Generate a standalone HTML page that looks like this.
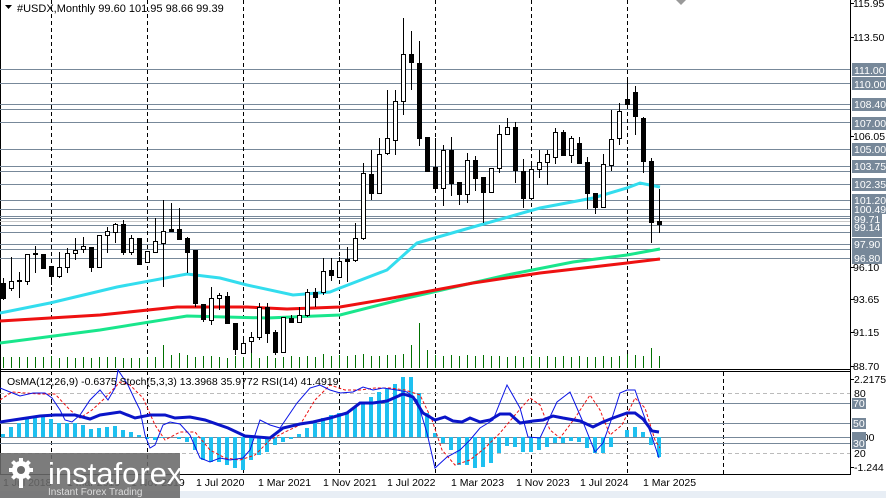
<!DOCTYPE html>
<html><head><meta charset="utf-8"><style>
html,body{margin:0;padding:0;background:#fff;}
svg{display:block;font-family:"Liberation Sans",Tahoma,sans-serif;}
.w{fill:#fff;stroke:#000;stroke-width:1}
.b{fill:#000;stroke:#000;stroke-width:1}
.k{stroke:#000;stroke-width:1}
.t{font-size:10.5px;fill:#000}
.lb{font-size:10.5px;fill:#fff}
</style></head><body>
<svg width="886" height="498" viewBox="0 0 886 498" xmlns="http://www.w3.org/2000/svg">
<rect width="886" height="498" fill="#fff"/>
<!-- frames -->
<line x1="0.5" y1="0" x2="0.5" y2="474" stroke="#000"/>
<line x1="850.5" y1="0" x2="850.5" y2="474" stroke="#000"/>
<line x1="0" y1="369.5" x2="851" y2="369.5" stroke="#000"/>
<line x1="0" y1="371.5" x2="851" y2="371.5" stroke="#000"/>
<line x1="0" y1="474.5" x2="851" y2="474.5" stroke="#000"/>
<polygon points="676,0 686,0 681,5" fill="#999"/>
<!-- level lines -->
<g stroke="#778899" stroke-width="1">
<line x1="0" x2="850" y1="69.5" y2="69.5"/><line x1="0" x2="850" y1="83.5" y2="83.5"/>
<line x1="0" x2="850" y1="104.5" y2="104.5"/><line x1="0" x2="850" y1="109.5" y2="109.5"/>
<line x1="0" x2="850" y1="122.5" y2="122.5"/><line x1="0" x2="850" y1="149.5" y2="149.5"/>
<line x1="0" x2="850" y1="166.5" y2="166.5"/><line x1="0" x2="850" y1="171.5" y2="171.5"/>
<line x1="0" x2="850" y1="184.5" y2="184.5"/><line x1="0" x2="850" y1="200.5" y2="200.5"/>
<line x1="0" x2="850" y1="209.5" y2="209.5"/><line x1="0" x2="850" y1="216.5" y2="216.5"/>
<line x1="0" x2="850" y1="218.5" y2="218.5"/><line x1="0" x2="850" y1="225.5" y2="225.5"/>
<line x1="0" x2="850" y1="232.5" y2="232.5"/><line x1="0" x2="850" y1="244.5" y2="244.5"/>
<line x1="0" x2="850" y1="249.5" y2="249.5"/><line x1="0" x2="850" y1="258.5" y2="258.5"/>
</g>
<line x1="0" x2="850" y1="221.5" y2="221.5" stroke="#c8c8c8"/>
<!-- dashed verticals -->
<g stroke="#000" stroke-dasharray="4,3">
<line x1="51.5" x2="51.5" y1="0" y2="474"/><line x1="147.5" x2="147.5" y1="0" y2="474"/>
<line x1="243.5" x2="243.5" y1="0" y2="474"/><line x1="339.5" x2="339.5" y1="0" y2="474"/>
<line x1="435.5" x2="435.5" y1="0" y2="474"/><line x1="531.5" x2="531.5" y1="0" y2="474"/>
<line x1="627.5" x2="627.5" y1="0" y2="474"/><line x1="723.5" x2="723.5" y1="372" y2="474"/>
</g>
<!-- volumes -->
<g stroke="#007000" stroke-width="1">
<path d="M3.5 368V357M11.5 368V357M19.5 368V357M27.5 368V357M35.5 368V357M43.5 368V357M51.5 368V356M59.5 368V358M67.5 368V357M75.5 368V358M83.5 368V357M91.5 368V358M99.5 368V357M107.5 368V357M115.5 368V357M123.5 368V358M131.5 368V358M139.5 368V358M147.5 368V357M155.5 368V357M163.5 368V345M171.5 368V355M179.5 368V353M187.5 368V355M195.5 368V357M203.5 368V356M211.5 368V356M219.5 368V357M227.5 368V358M235.5 368V356M243.5 368V357M251.5 368V353M259.5 368V358M267.5 368V356M275.5 368V358M283.5 368V357M291.5 368V356M299.5 368V357M307.5 368V356M315.5 368V357M323.5 368V354M331.5 368V356M339.5 368V355M347.5 368V356M355.5 368V355M363.5 368V354M371.5 368V356M379.5 368V356M387.5 368V355M395.5 368V355M403.5 368V354M411.5 368V345M419.5 368V323M427.5 368V350M435.5 368V355M443.5 368V356M451.5 368V355M459.5 368V356M467.5 368V355M475.5 368V356M483.5 368V355M491.5 368V356M499.5 368V356M507.5 368V357M515.5 368V356M523.5 368V357M531.5 368V356M539.5 368V357M547.5 368V356M555.5 368V357M563.5 368V356M571.5 368V357M579.5 368V356M587.5 368V357M595.5 368V357M603.5 368V356M611.5 368V357M619.5 368V356M627.5 368V354M635.5 368V355M643.5 368V356M651.5 368V348M659.5 368V356"/>
</g>
<!-- MAs -->
<polyline fill="none" stroke="#19e68c" stroke-width="3" points="0,343 100,330 187,316 267,318 340,315 407,298 507,275 573,262 627,255 660,249"/>
<polyline fill="none" stroke="#ee1111" stroke-width="3" points="0,321 100,315 177,307 247,307 287,309 340,307 387,299 473,283 540,273 627,263 660,259"/>
<polyline fill="none" stroke="#33ddee" stroke-width="3" points="0,313 50,303 117,287 187,274 220,278 247,285 293,295 330,292 340,288 387,270 417,243 480,225 540,208 593,198 627,188 640,183 660,187"/>
<!-- candles -->
<g id="c">
<path class="k" d="M3.5 278V300M11.5 257V291M19.5 272V298M27.5 254V285M35.5 246V273M43.5 254V268M51.5 266V285M59.5 252V278M67.5 248V273M75.5 238V260M83.5 237V253M91.5 247V272M99.5 235V267M107.5 227V253M115.5 223V243M123.5 220V255M131.5 235V255M139.5 238V264M147.5 251V262M155.5 218V253M163.5 200V287M171.5 203V231M179.5 208V240M187.5 237V273M195.5 250V307M203.5 304V322M211.5 287V325M219.5 293V310M227.5 292V323M235.5 323V355M243.5 337V353M251.5 332V353M259.5 303V340M267.5 303V343M275.5 330V355M283.5 317V352M291.5 315V322M299.5 307V323M307.5 289V317M315.5 288V307M323.5 258V295M331.5 258V281M339.5 257V277M347.5 247V282M355.5 223V262M363.5 163V240M371.5 150V200M379.5 138V194M387.5 90V155M395.5 90V155M403.5 18V115M411.5 31V90M419.5 41V146M427.5 137V171M435.5 138V188M443.5 145V206M451.5 137V196M459.5 182V205M467.5 153V203M475.5 156V191M483.5 177V223M491.5 168V192M499.5 125V173M507.5 118V134M515.5 122V183M523.5 159V208M531.5 162V198M539.5 150V178M547.5 150V185M555.5 128V164M563.5 130V155M571.5 136V163M579.5 137V163M587.5 157V209M595.5 193V214M603.5 154V207M611.5 110V171M619.5 103V145M627.5 80V104M635.5 86V135M643.5 117V173M651.5 158V243M659.5 189V233"/>
<rect class="b" x="1.5" y="283.5" width="4" height="15"/>
<rect class="w" x="9.5" y="281.5" width="4" height="7"/>
<rect class="b" x="17.5" y="280.5" width="4" height="1"/>
<rect class="w" x="25.5" y="254.5" width="4" height="27"/>
<rect class="b" x="33.5" y="253.5" width="4" height="1"/>
<rect class="b" x="41.5" y="254.5" width="4" height="14"/>
<rect class="b" x="49.5" y="266.5" width="4" height="10"/>
<rect class="w" x="57.5" y="267.5" width="4" height="9"/>
<rect class="w" x="65.5" y="253.5" width="4" height="14"/>
<rect class="w" x="73.5" y="250.5" width="4" height="3"/>
<rect class="w" x="81.5" y="246.5" width="4" height="3"/>
<rect class="b" x="89.5" y="247.5" width="4" height="20"/>
<rect class="w" x="97.5" y="235.5" width="4" height="32"/>
<rect class="w" x="105.5" y="231.5" width="4" height="4"/>
<rect class="w" x="113.5" y="224.5" width="4" height="8"/>
<rect class="b" x="121.5" y="224.5" width="4" height="28"/>
<rect class="w" x="129.5" y="238.5" width="4" height="14"/>
<rect class="b" x="137.5" y="238.5" width="4" height="26"/>
<rect class="w" x="145.5" y="251.5" width="4" height="11"/>
<rect class="w" x="153.5" y="241.5" width="4" height="11"/>
<rect class="w" x="161.5" y="231.5" width="4" height="12"/>
<rect class="b" x="169.5" y="229.5" width="4" height="2"/>
<rect class="b" x="177.5" y="229.5" width="4" height="10"/>
<rect class="b" x="185.5" y="238.5" width="4" height="14"/>
<rect class="b" x="193.5" y="250.5" width="4" height="53"/>
<rect class="b" x="201.5" y="304.5" width="4" height="15"/>
<rect class="w" x="209.5" y="298.5" width="4" height="22"/>
<rect class="w" x="217.5" y="295.5" width="4" height="3"/>
<rect class="b" x="225.5" y="296.5" width="4" height="27"/>
<rect class="b" x="233.5" y="323.5" width="4" height="26"/>
<rect class="w" x="241.5" y="343.5" width="4" height="10"/>
<rect class="w" x="249.5" y="337.5" width="4" height="4"/>
<rect class="w" x="257.5" y="307.5" width="4" height="30"/>
<rect class="b" x="265.5" y="307.5" width="4" height="26"/>
<rect class="b" x="273.5" y="332.5" width="4" height="20"/>
<rect class="w" x="281.5" y="317.5" width="4" height="35"/>
<rect class="b" x="289.5" y="318.5" width="4" height="4"/>
<rect class="w" x="297.5" y="315.5" width="4" height="7"/>
<rect class="w" x="305.5" y="292.5" width="4" height="23"/>
<rect class="b" x="313.5" y="292.5" width="4" height="5"/>
<rect class="w" x="321.5" y="271.5" width="4" height="21"/>
<rect class="b" x="329.5" y="270.5" width="4" height="5"/>
<rect class="w" x="337.5" y="261.5" width="4" height="16"/>
<rect class="b" x="345.5" y="259.5" width="4" height="2"/>
<rect class="w" x="353.5" y="238.5" width="4" height="22"/>
<rect class="w" x="361.5" y="173.5" width="4" height="65"/>
<rect class="b" x="369.5" y="174.5" width="4" height="19"/>
<rect class="w" x="377.5" y="154.5" width="4" height="39"/>
<rect class="w" x="385.5" y="138.5" width="4" height="15"/>
<rect class="w" x="393.5" y="101.5" width="4" height="39"/>
<rect class="w" x="401.5" y="54.5" width="4" height="47"/>
<rect class="b" x="409.5" y="54.5" width="4" height="8"/>
<rect class="b" x="417.5" y="63.5" width="4" height="75"/>
<rect class="b" x="425.5" y="137.5" width="4" height="34"/>
<rect class="b" x="433.5" y="167.5" width="4" height="21"/>
<rect class="w" x="441.5" y="150.5" width="4" height="38"/>
<rect class="b" x="449.5" y="150.5" width="4" height="33"/>
<rect class="b" x="457.5" y="182.5" width="4" height="12"/>
<rect class="w" x="465.5" y="160.5" width="4" height="34"/>
<rect class="b" x="473.5" y="160.5" width="4" height="18"/>
<rect class="b" x="481.5" y="177.5" width="4" height="15"/>
<rect class="w" x="489.5" y="168.5" width="4" height="24"/>
<rect class="w" x="497.5" y="134.5" width="4" height="34"/>
<rect class="w" x="505.5" y="127.5" width="4" height="7"/>
<rect class="b" x="513.5" y="127.5" width="4" height="43"/>
<rect class="b" x="521.5" y="171.5" width="4" height="27"/>
<rect class="w" x="529.5" y="169.5" width="4" height="29"/>
<rect class="w" x="537.5" y="162.5" width="4" height="7"/>
<rect class="w" x="545.5" y="154.5" width="4" height="8"/>
<rect class="w" x="553.5" y="132.5" width="4" height="25"/>
<rect class="b" x="561.5" y="132.5" width="4" height="23"/>
<rect class="w" x="569.5" y="138.5" width="4" height="17"/>
<rect class="b" x="577.5" y="143.5" width="4" height="20"/>
<rect class="b" x="585.5" y="162.5" width="4" height="31"/>
<rect class="b" x="593.5" y="193.5" width="4" height="14"/>
<rect class="w" x="601.5" y="164.5" width="4" height="43"/>
<rect class="w" x="609.5" y="139.5" width="4" height="26"/>
<rect class="w" x="617.5" y="111.5" width="4" height="27"/>
<rect class="b" x="625.5" y="99.5" width="4" height="5"/>
<rect class="b" x="633.5" y="92.5" width="4" height="24"/>
<rect class="b" x="641.5" y="118.5" width="4" height="43"/>
<rect class="b" x="649.5" y="161.5" width="4" height="61"/>
<rect class="b" x="657.5" y="221.5" width="4" height="3"/>
</g>
<!-- header -->
<polygon points="5,5 12,5 8.5,9" fill="#000"/>
<text x="17" y="12" font-size="11" fill="#000">#USDX,Monthly  99.60 101.95 98.66 99.39</text>
<!-- right axis price -->
<g class="t">
<text x="853" y="7">115.95</text><text x="853" y="41">113.50</text>
<text x="853" y="140">106.05</text><text x="853" y="271">96.10</text>
<text x="853" y="303">93.65</text><text x="853" y="336">91.15</text><text x="853" y="370">88.70</text>
</g>
<g stroke="#000"><path d="M850 3.5h4M850 37.5h4M850 136.5h4M850 267.5h4M850 299.5h4M850 332.5h4M850 366.5h4M850 379.5h4M850 467.5h4"/></g>
<g fill="#778899">
<rect x="852" y="63" width="34" height="13"/><rect x="852" y="77" width="34" height="13"/>
<rect x="852" y="98" width="34" height="13"/><rect x="852" y="117" width="34" height="13"/>
<rect x="852" y="143" width="34" height="13"/><rect x="852" y="160" width="34" height="13"/>
<rect x="852" y="178" width="34" height="13"/><rect x="852" y="194" width="34" height="13"/>
<rect x="852" y="203" width="34" height="11"/><rect x="852" y="214" width="30" height="12"/>
<rect x="852" y="221" width="30" height="12"/><rect x="852" y="229" width="30" height="8"/>
<rect x="852" y="238" width="30" height="12"/><rect x="852" y="246" width="30" height="6"/>
<rect x="852" y="252" width="30" height="12"/>
</g>
<g class="lb">
<text x="854" y="74">111.00</text><text x="854" y="88">110.00</text>
<text x="854" y="108">108.40</text><text x="854" y="127">107.00</text>
<text x="854" y="153">105.00</text><text x="854" y="170">103.75</text>
<text x="854" y="188">102.35</text><text x="854" y="204">101.20</text>
<text x="854" y="213">100.49</text><text x="854" y="223">99.71</text>
<text x="854" y="231">99.14</text><text x="854" y="248">97.90</text>
<text x="854" y="262">96.80</text>
</g>
<!-- indicator levels -->
<g>
<line x1="0" x2="850" y1="393.5" y2="393.5" stroke="#bbb" stroke-dasharray="4,3"/>
<line x1="0" x2="850" y1="403.5" y2="403.5" stroke="#778899"/>
<line x1="0" x2="850" y1="423.5" y2="423.5" stroke="#778899"/>
<line x1="0" x2="850" y1="437.5" y2="437.5" stroke="#778899"/>
<line x1="0" x2="850" y1="443.5" y2="443.5" stroke="#778899"/>
<line x1="0" x2="850" y1="453.5" y2="453.5" stroke="#bbb" stroke-dasharray="4,3"/>
</g>
<!-- OsMA histogram -->
<g stroke="#1ec0f0" stroke-width="4">
<path d="M3 437V434M11 437V427M19 437V423M27 437V417M35 437V416M43 437V416M51 437V419M59 437V423M67 437V423M75 437V423M83 437V425M91 437V429M99 437V428M107 437V427M115 437V426M123 437V430M131 437V432M139 437V435M147 437V439M155 437V440M163 437V438M179 437V439M187 437V442M195 437V450M203 437V460M211 437V462M219 437V462M227 437V465M235 437V468M243 437V470M251 437V460M259 437V455M267 437V452M275 437V445M283 437V442M291 437V439M299 437V434M307 437V428M315 437V422M323 437V418M331 437V415M339 437V413M347 437V412M355 437V407M363 437V402M371 437V397M379 437V392M387 437V389M395 437V384M403 437V377M411 437V377M419 437V393M427 437V413M435 437V433M443 437V443M451 437V450M459 437V465M467 437V465M475 437V468M483 437V467M491 437V463M499 437V453M507 437V446M515 437V447M523 437V452M531 437V452M539 437V450M547 437V447M555 437V443M563 437V443M571 437V441M579 437V442M587 437V448M595 437V453M603 437V453M611 437V447M627 437V430M635 437V427M643 437V432M651 437V445M659 437V457"/>
</g>
<!-- stoch signal red dashed -->
<polyline fill="none" stroke="#ee1111" stroke-width="1" stroke-dasharray="3,2" points="0,400 12,392 25,393 40,394 55,394 70,410 80,418 92,410 105,398 120,382 130,385 143,398 155,425 165,440 180,432 195,432 210,450 225,458 240,460 255,455 270,440 285,432 300,425 315,400 330,385 345,390 360,390 375,388 390,388 405,390 420,395 432,420 442,450 455,465 470,460 485,448 500,433 515,415 530,398 540,405 550,430 560,438 575,418 590,395 600,410 610,435 622,425 635,398 645,408 655,440 660,448"/>
<!-- stoch main -->
<polyline fill="none" stroke="#0a14e6" stroke-width="1" points="0,388 10,392 20,396 33,393 45,393 52,398 60,410 65,420 72,422 80,415 90,400 100,390 108,400 115,388 118,370 128,385 135,400 140,410 145,435 150,448 155,445 163,425 170,422 180,424 190,435 200,458 210,462 220,458 230,460 243,458 250,450 260,420 270,425 280,428 297,403 310,388 320,385 330,390 340,393 353,392 363,387 373,390 383,388 397,390 407,392 417,400 427,433 435,468 447,457 460,450 470,440 480,428 493,420 507,385 520,408 528,437 540,438 557,402 570,392 583,422 595,452 603,443 613,415 620,393 627,390 635,390 643,413 652,437 659,458"/>
<!-- RSI thick -->
<polyline fill="none" stroke="#0a14c8" stroke-width="3" points="0,422 20,419 40,416 55,415 75,415 90,419 100,415 120,412 135,418 150,415 165,415 175,418 190,417 205,420 228,428 245,436 270,438 283,428 300,424 313,422 330,418 347,413 360,403 373,403 387,401 403,394 413,397 423,413 435,420 445,417 453,421 462,422 470,418 480,422 490,420 500,414 510,414 520,423 533,421 543,420 553,416 563,418 580,421 593,427 603,422 613,418 627,413 635,413 643,419 652,431 659,432"/>
<!-- indicator axis labels -->
<text x="7" y="385" font-size="10.5" fill="#000">OsMA(12,26,9) -0.6375  Stoch(5,3,3) 13.3968 35.9772  RSI(14) 41.4919</text>
<g class="t">
<text x="854" y="383">2.2175</text><text x="854" y="397">80</text>
<text x="854" y="441">0.00</text><text x="854" y="457">20</text><text x="854" y="471">-1.244</text>
</g>
<g fill="#778899"><rect x="852" y="398" width="14" height="11"/><rect x="852" y="418" width="14" height="11"/><rect x="852" y="432" width="14" height="6"/><rect x="852" y="438" width="14" height="11"/></g>
<g class="lb"><text x="853" y="407">70</text><text x="853" y="427">50</text><text x="853" y="447">30</text></g>
<!-- time axis -->
<g font-size="10.5" fill="#000">
<text x="3" y="486">1 Jul 2018</text><text x="67" y="486">1 Mar 2019</text><text x="131" y="486">1 Nov 2019</text>
<text x="196" y="486">1 Jul 2020</text><text x="258" y="486">1 Mar 2021</text><text x="323" y="486">1 Nov 2021</text>
<text x="387" y="486">1 Jul 2022</text><text x="451" y="486">1 Mar 2023</text><text x="516" y="486">1 Nov 2023</text>
<text x="580" y="486">1 Jul 2024</text><text x="643" y="486">1 Mar 2025</text>
</g>
<rect x="0" y="491" width="886" height="7" fill="#e8eef5"/>
<!-- logo -->
<rect x="0" y="453" width="180" height="45" fill="#6a6a6a" fill-opacity="0.88"/>
<g fill="#fff">
<circle cx="21" cy="470" r="9"/>
<g stroke="#fff" stroke-width="4"><path d="M21 458v24M9 470h24M12.5 461.5l17 17M29.5 461.5l-17 17"/></g>
<circle cx="21" cy="470" r="4" fill="#6a6a6a"/>
<rect x="19" y="474" width="4" height="14"/>
<text x="48" y="484" font-size="31" fill="#fff" font-family="Liberation Sans,sans-serif">instaforex</text>
<text x="48" y="495" font-size="10" fill="#ddd">Instant Forex Trading</text>
</g>
</svg>
</body></html>
